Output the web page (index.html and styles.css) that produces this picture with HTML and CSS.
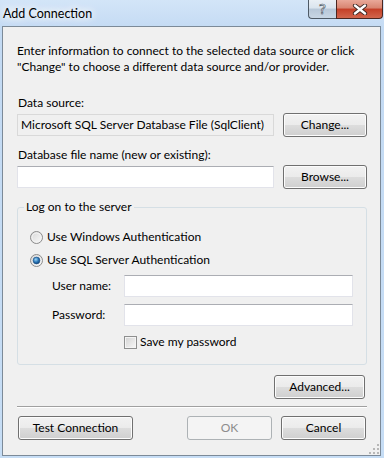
FILE: index.html
```html
<!DOCTYPE html>
<html lang="en">
<head>
  <meta charset="UTF-8">
  <title>Add Connection</title>
  <link rel="stylesheet" href="styles.css">
</head>
<body>
  <div class="window">
    <div class="titlebar">
      <span class="title">Add Connection</span>
      <div class="caption-buttons">
        <button class="cap help"><span>?</span></button>
        <button class="cap close">
          <svg width="16" height="11" viewBox="0 0 16 11">
            <path d="M3 1.5 L13 9.5 M13 1.5 L3 9.5" stroke="#3b2420" stroke-width="4.2" stroke-linecap="round"/>
            <path d="M3 1.5 L13 9.5 M13 1.5 L3 9.5" stroke="#fff" stroke-width="2.4" stroke-linecap="round"/>
          </svg>
        </button>
      </div>
    </div>

    <div class="client">
      <p class="intro">Enter information to connect to the selected data source or click<br>"Change" to choose a different data source and/or provider.</p>

      <div class="field-label">Data source:</div>
      <div class="row">
        <div class="textbox readonly">Microsoft SQL Server Database File (SqlClient)</div>
        <button class="btn">Change...</button>
      </div>

      <div class="field-label second">Database file name (new or existing):</div>
      <div class="row">
        <input class="textbox" type="text">
        <button class="btn">Browse...</button>
      </div>

      <fieldset class="group">
        <legend>Log on to the server</legend>
        <div class="option">
          <svg class="radio" width="13" height="13" viewBox="0 0 13 13">
            <defs>
              <linearGradient id="rfill" x1="0" y1="0" x2="1" y2="1">
                <stop offset="0" stop-color="#d6d6d6"/>
                <stop offset="1" stop-color="#fbfbfb"/>
              </linearGradient>
            </defs>
            <circle cx="6.5" cy="6.5" r="6" fill="url(#rfill)" stroke="#8a8a8a"/>
            <circle cx="6.5" cy="6.5" r="4.5" fill="none" stroke="#f4f4f4"/>
          </svg>
          <span>Use Windows Authentication</span>
        </div>
        <div class="option">
          <svg class="radio" width="13" height="13" viewBox="0 0 13 13">
            <defs>
              <radialGradient id="rdot" cx="0.4" cy="0.35" r="0.7">
                <stop offset="0" stop-color="#9fd6f6"/>
                <stop offset="0.55" stop-color="#2a77b8"/>
                <stop offset="1" stop-color="#0c3f75"/>
              </radialGradient>
            </defs>
            <circle cx="6.5" cy="6.5" r="6" fill="url(#rfill)" stroke="#8a8a8a"/>
            <circle cx="6.5" cy="6.5" r="3.4" fill="url(#rdot)" stroke="#1b4e82" stroke-width="0.6"/>
          </svg>
          <span>Use SQL Server Authentication</span>
        </div>

        <div class="credentials">
          <label class="cred-label">User name:</label>
          <input class="textbox" type="text">
          <label class="cred-label">Password:</label>
          <input class="textbox" type="password">
          <span></span>
          <div class="save">
            <span class="checkbox"></span>
            <span>Save my password</span>
          </div>
        </div>
      </fieldset>

      <div class="advanced-row">
        <button class="btn advanced">Advanced...</button>
      </div>

      <hr class="sep">

      <div class="footer">
        <button class="btn test">Test Connection</button>
        <button class="btn ok" disabled>OK</button>
        <button class="btn cancel">Cancel</button>
      </div>

      <div class="grip">
        <svg width="10" height="10" viewBox="0 0 10 10">
          <g fill="#b7b7b7">
            <rect x="8" y="0" width="2" height="2"/>
            <rect x="4" y="4" width="2" height="2"/>
            <rect x="8" y="4" width="2" height="2"/>
            <rect x="0" y="8" width="2" height="2"/>
            <rect x="4" y="8" width="2" height="2"/>
            <rect x="8" y="8" width="2" height="2"/>
          </g>
        </svg>
      </div>
    </div>
  </div>
</body>
</html>
```

FILE: styles.css
```css
* {
  box-sizing: border-box;
  margin: 0;
  padding: 0;
}

body {
  font-family: "Segoe UI", Lato, sans-serif;
  font-size: 12px;
  line-height: 16px;
  color: #000;
  background: #c6ddf5;
}

.window {
  width: 384px;
  height: 458px;
  display: flex;
  flex-direction: column;
  padding: 0 3px 2px 2px;
  background: linear-gradient(to bottom, #d3e5f8 0px, #c3daf3 30px, #c6ddf5 100%);
}

.titlebar {
  height: 26px;
  display: flex;
  justify-content: space-between;
  align-items: flex-start;
}

.title {
  margin-top: 6px;
  padding-left: 1px;
  font-size: 12.5px;
  text-shadow: 0 0 6px #fff, 0 0 10px #fff, 0 0 14px #fff;
}

.caption-buttons {
  display: flex;
  margin-right: -2px;
}

.cap {
  height: 19px;
  border: 1px solid #4e5a66;
  border-top: none;
  display: flex;
  align-items: center;
  justify-content: center;
}

.help {
  width: 28px;
  border-right: none;
  border-radius: 0 0 0 4px;
  background: linear-gradient(to bottom, #e9eff5 0, #dae4ee 45%, #b7c7d8 50%, #c8d6e4 100%);
  font-family: "DejaVu Sans", sans-serif;
  font-size: 14px;
  color: #fff;
  -webkit-text-stroke: 0.6px #43505c;
}

.close {
  width: 47px;
  border-radius: 0 0 4px 0;
  border-color: #4b2620;
  background: linear-gradient(to bottom, #e9a999 0, #d88470 45%, #c43f27 50%, #d2664d 100%);
}

.client {
  flex: 1;
  position: relative;
  border: 1px solid #7c8a98;
  background: #f0f0f0;
  padding: 16px 13px 0 14px;
}

.intro {
  line-height: 16px;
  white-space: nowrap;
}

.field-label {
  margin-top: 20px;
  padding-left: 1px;
}

.field-label.second {
  margin-top: 10px;
}

.row {
  display: flex;
  align-items: center;
  gap: 9px;
  margin-top: 2px;
  height: 24px;
}

.textbox {
  height: 22px;
  border: 1px solid #e2e3ea;
  border-top-color: #abadb3;
  background: #fff;
  font: inherit;
  outline: none;
}

.row .textbox {
  flex: 1;
  min-width: 0;
}

.readonly {
  background: #f0f0f0;
  border-color: #d9d9d9;
  padding: 2px 3px;
  line-height: 16px;
  white-space: nowrap;
  overflow: hidden;
}

.btn {
  width: 84px;
  height: 24px;
  font: inherit;
  color: #000;
  border: 1px solid #707070;
  border-radius: 3px;
  box-shadow: inset 0 0 0 1px #fcfcfc;
  background: linear-gradient(to bottom, #f2f2f2 0, #ebebeb 50%, #dddddd 50%, #cfcfcf 100%);
}

.group {
  margin-top: 10px;
  border: 1px solid #d5dfe5;
  border-radius: 3px;
  padding: 14px 13px 14px 13px;
}

.group legend {
  margin-left: -7px;
  padding: 0 2px;
}

.option {
  display: flex;
  align-items: center;
  gap: 4px;
  height: 16px;
  margin-left: -1px;
}

.option + .option {
  margin-top: 7px;
}

.credentials {
  display: grid;
  grid-template-columns: 72px 1fr;
  row-gap: 7px;
  align-items: center;
  margin-top: 7px;
  padding-left: 21px;
}

.credentials .textbox {
  width: 100%;
}

.save {
  display: flex;
  align-items: center;
  gap: 3px;
  margin-top: 1px;
  height: 16px;
}

.checkbox {
  width: 13px;
  height: 13px;
  border: 1px solid #8e8f8f;
  background: linear-gradient(135deg, #d2d2d2, #f8f8f8);
  box-shadow: inset 0 0 0 1px #f4f4f4;
}

.advanced-row {
  display: flex;
  justify-content: flex-end;
  margin-top: 10px;
  padding-right: 2px;
}

.advanced {
  width: 91px;
}

.sep {
  margin-top: 7px;
  border: none;
  border-top: 1px solid #a0a0a0;
  border-bottom: 1px solid #fff;
}

.footer {
  display: flex;
  gap: 9px;
  margin-top: 8px;
  padding: 0 1px;
}

.test {
  width: 115px;
  margin-right: auto;
}

.ok,
.cancel {
  width: 85px;
}

.ok {
  color: #8d8d8d;
  border-color: #adb2b5;
  background: #f4f4f4;
  box-shadow: none;
}

.grip {
  position: absolute;
  right: 1px;
  bottom: 1px;
  line-height: 0;
}
```
